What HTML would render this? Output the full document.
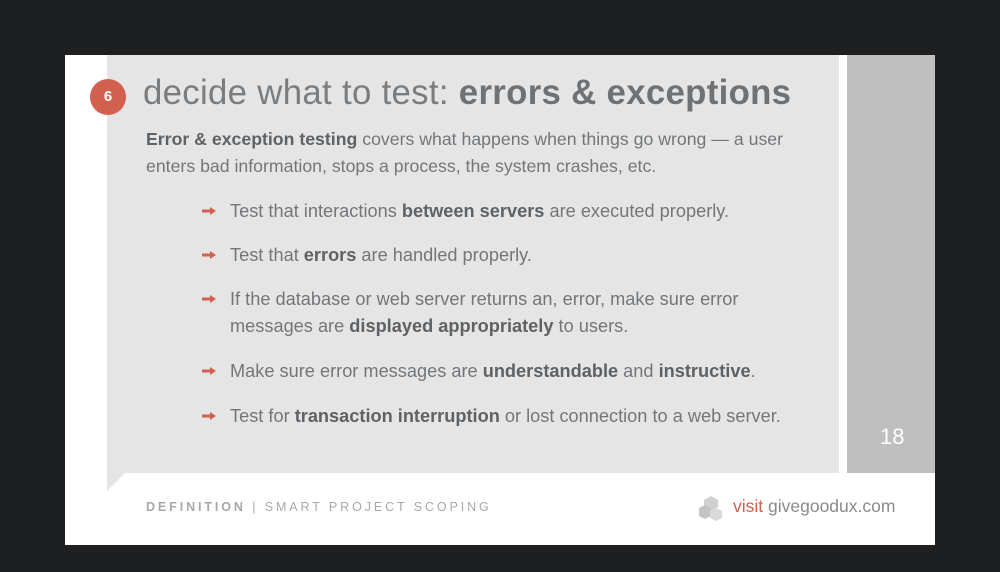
<!DOCTYPE html>
<html><head><style>
body{margin:0;width:1000px;height:572px;background:#1d1f21;position:relative;overflow:hidden;font-family:"Liberation Sans",sans-serif;}
.slide{position:absolute;left:65px;top:55px;width:870px;height:490px;background:#fff;}
.panel{position:absolute;left:107px;top:55px;width:732px;height:418px;background:#e5e5e5;}
.tri{position:absolute;left:107px;top:473px;width:0;height:0;border-top:18px solid #e5e5e5;border-right:18px solid transparent;}
.bar{position:absolute;left:847px;top:55px;width:88px;height:418px;background:#bfbfbf;}
.num{position:absolute;left:880px;top:424px;color:#fff;font-size:22px;}
.circ{position:absolute;left:90px;top:79px;width:36px;height:36px;border-radius:50%;background:#d2604f;color:#fff;font-size:15px;font-weight:bold;text-align:center;line-height:36px;}
.title{position:absolute;left:143px;top:73px;font-size:34.8px;color:#7a7d80;white-space:nowrap;letter-spacing:0.3px;}
.title b{color:#6f7275;}
.intro{position:absolute;left:146px;top:126px;font-size:17.7px;line-height:27px;color:#737679;white-space:nowrap;}
.intro b,.li b{color:#5f6265;}
.li{position:absolute;left:230px;font-size:18.2px;line-height:27px;color:#737679;white-space:nowrap;}
.ar{position:absolute;left:202px;width:14px;height:8px;}
.foot{position:absolute;left:146px;top:500px;font-size:12.5px;letter-spacing:2.9px;color:#a8a8a8;font-weight:bold;}
.foot span{font-weight:normal;}
.visit{position:absolute;left:733px;top:496px;font-size:17.5px;color:#8a8a8a;}
.visit i{font-style:normal;color:#d2604f;}
</style></head><body>
<div class="slide"></div>
<div class="panel"></div>
<div class="tri"></div>
<div class="bar"></div>
<div class="num">18</div>
<div class="circ">6</div>
<div class="title">decide what to test: <b>errors &amp; exceptions</b></div>
<div class="intro"><b>Error &amp; exception testing</b> covers what happens when things go wrong — a user<br>enters bad information, stops a process, the system crashes, etc.</div>

<svg class="ar" style="top:207px" viewBox="0 0 14 8"><path d="M0 2.5h8V0l6 4-6 4V5.5H0z" fill="#d2604f"/></svg>
<div class="li" style="top:198px">Test that interactions <b>between servers</b> are executed properly.</div>
<svg class="ar" style="top:251px" viewBox="0 0 14 8"><path d="M0 2.5h8V0l6 4-6 4V5.5H0z" fill="#d2604f"/></svg>
<div class="li" style="top:242px">Test that <b>errors</b> are handled properly.</div>
<svg class="ar" style="top:295px" viewBox="0 0 14 8"><path d="M0 2.5h8V0l6 4-6 4V5.5H0z" fill="#d2604f"/></svg>
<div class="li" style="top:286px">If the database or web server returns an, error, make sure error<br>messages are <b>displayed appropriately</b> to users.</div>
<svg class="ar" style="top:367px" viewBox="0 0 14 8"><path d="M0 2.5h8V0l6 4-6 4V5.5H0z" fill="#d2604f"/></svg>
<div class="li" style="top:358px">Make sure error messages are <b>understandable</b> and <b>instructive</b>.</div>
<svg class="ar" style="top:412px" viewBox="0 0 14 8"><path d="M0 2.5h8V0l6 4-6 4V5.5H0z" fill="#d2604f"/></svg>
<div class="li" style="top:403px">Test for <b>transaction interruption</b> or lost connection to a web server.</div>

<div class="foot">DEFINITION <span>| SMART PROJECT SCOPING</span></div>
<svg style="position:absolute;left:697px;top:494px" width="28" height="28" viewBox="0 0 28 28">
<polygon points="14,2 21,6 21,13 14,17 7,13 7,6" fill="#d0d0d0"/>
<polygon points="8,11 14,14 14,22 8,25 2,22 2,14" fill="#c4c4c4"/>
<polygon points="19,14 25,17 25,24 19,27 13,24 13,17" fill="#dadada"/>
</svg>
<div class="visit"><i>visit</i> givegoodux.com</div>
</body></html>
